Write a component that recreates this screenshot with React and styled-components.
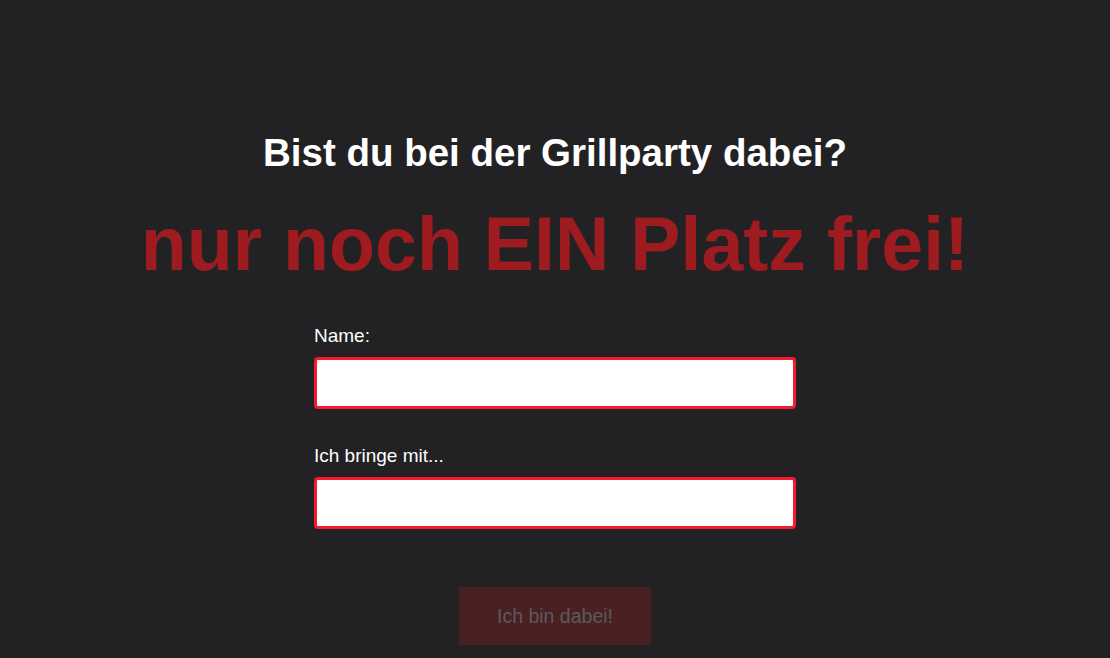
import React from "react";
import styled, { createGlobalStyle } from "styled-components";

const Global = createGlobalStyle`
  html, body {
    margin: 0;
    padding: 0;
    background: #222224;
    font-family: "Liberation Sans", Arial, sans-serif;
  }
`;

const Page = styled.div`
  min-height: 658px;
  display: flex;
  flex-direction: column;
  align-items: center;
  padding-top: 131px;
  box-sizing: border-box;
`;

const Title = styled.h1`
  margin: 0;
  color: #ffffff;
  font-size: 38.5px;
  font-weight: 700;
  line-height: 44px;
`;

const Alert = styled.h2`
  margin: 26px 0 0;
  color: #9e1b1f;
  font-size: 75.3px;
  font-weight: 700;
  line-height: 86px;
`;

const Form = styled.form`
  width: 482px;
  margin-top: 38px;
  display: flex;
  flex-direction: column;
`;

const Field = styled.div`
  display: flex;
  flex-direction: column;
  margin-bottom: 36px;
`;

const Label = styled.label`
  color: #ffffff;
  font-size: 19px;
  line-height: 22px;
  margin-bottom: 10px;
`;

const Input = styled.input`
  height: 52px;
  box-sizing: border-box;
  border: 3px solid #f51a2c;
  border-radius: 4px;
  background: #ffffff;
  outline: none;
  font-size: 18px;
  padding: 0 10px;
`;

const Button = styled.button`
  align-self: center;
  margin-top: 22px;
  width: 192px;
  height: 58px;
  border: none;
  background: #4a2022;
  color: #5b5b5b;
  font-family: "Liberation Sans", Arial, sans-serif;
  font-size: 19.5px;
`;

export default function App() {
  return (
    <>
      <Global />
      <Page>
        <Title>Bist du bei der Grillparty dabei?</Title>
        <Alert>nur noch EIN Platz frei!</Alert>
        <Form onSubmit={(e) => e.preventDefault()}>
          <Field>
            <Label htmlFor="name">Name:</Label>
            <Input id="name" type="text" />
          </Field>
          <Field>
            <Label htmlFor="mit">Ich bringe mit...</Label>
            <Input id="mit" type="text" />
          </Field>
          <Button type="submit" disabled>Ich bin dabei!</Button>
        </Form>
      </Page>
    </>
  );
}
